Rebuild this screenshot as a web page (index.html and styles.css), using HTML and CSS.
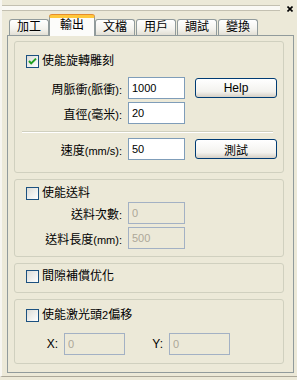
FILE: index.html
```html
<!DOCTYPE html>
<html lang="zh-Hant">
<head>
    <meta charset="UTF-8">
    <title>輸出</title>
    <link rel="stylesheet" href="styles.css">
</head>
<body>
    <div class="window">
        <div class="titlebar">
            <div class="grip"></div>
            <svg class="close" width="6" height="6" viewBox="0 0 6 6">
                <path d="M0.5 0.5 L5.5 5.5 M5.5 0.5 L0.5 5.5" stroke="#000" stroke-width="1.6"/>
            </svg>
        </div>

        <div class="tabs">
            <div class="tab">加工</div>
            <div class="tab active">輸出</div>
            <div class="tab">文檔</div>
            <div class="tab">用戶</div>
            <div class="tab">調試</div>
            <div class="tab">變換</div>
        </div>

        <div class="tabpage">
            <div class="group rotate">
                <label class="check">
                    <span class="box">
                        <svg width="11" height="11" viewBox="0 0 11 11">
                            <path d="M2 5 L4.2 7.4 L9 2.6" fill="none" stroke="#21A121" stroke-width="2"/>
                        </svg>
                    </span>
                    <span>使能旋轉雕刻</span>
                </label>
                <div class="row first">
                    <span class="label">周脈衝<span class="lat">(</span>脈衝<span class="lat">):</span></span>
                    <input class="field" type="text" value="1000">
                    <button class="btn">Help</button>
                </div>
                <div class="row">
                    <span class="label">直徑<span class="lat">(</span>毫米<span class="lat">):</span></span>
                    <input class="field" type="text" value="20">
                </div>
                <div class="sep"></div>
                <div class="row speed">
                    <span class="label">速度<span class="lat">(mm/s):</span></span>
                    <input class="field" type="text" value="50">
                    <button class="btn">測試</button>
                </div>
            </div>

            <div class="group feed">
                <label class="check"><span class="box"></span><span>使能送料</span></label>
                <div class="row first">
                    <span class="label">送料次數<span class="lat">:</span></span>
                    <input class="field" type="text" value="0" disabled>
                </div>
                <div class="row">
                    <span class="label">送料長度<span class="lat">(mm):</span></span>
                    <input class="field" type="text" value="500" disabled>
                </div>
            </div>

            <div class="group gap">
                <label class="check"><span class="box"></span><span>間隙補償优化</span></label>
            </div>

            <div class="group offset">
                <label class="check"><span class="box"></span><span>使能激光頭<span class="lat">2</span>偏移</span></label>
                <div class="row first">
                    <span class="label xlabel lat">X:</span>
                    <input class="field small" type="text" value="0" disabled>
                    <span class="label ylabel lat">Y:</span>
                    <input class="field small" type="text" value="0" disabled>
                </div>
            </div>
        </div>
    </div>
</body>
</html>
```

FILE: styles.css
```css
* {
    box-sizing: border-box;
    margin: 0;
    padding: 0;
}

body {
    background: #ECE9D8;
    color: #000;
    font-family: "Liberation Sans", "Noto Sans CJK TC", sans-serif;
    font-size: 12px;
    width: 297px;
    height: 380px;
    overflow: hidden;
}

.lat {
    font-size: 11px;
}

.window {
    height: 377px;
    border-left: 2px solid #F7F6F1;
    border-bottom: 1px solid #ACA899;
}

/* grip bar + close */
.titlebar {
    height: 15px;
    display: flex;
    align-items: flex-start;
}

.grip {
    width: 278px;
    height: 6px;
    margin-top: 5px;
    background: #FAF9F5;
    border-top: 1px solid #C3C0B1;
    border-bottom: 1px solid #C3C0B1;
}

.close {
    margin: 6px 0 0 7px;
}

/* tabs */
.tabs {
    height: 20px;
    display: flex;
    align-items: flex-end;
    gap: 1px;
    padding-left: 7px;
}

.tab {
    height: 16px;
    padding: 0 7px;
    line-height: 14px;
    border: 1px solid #919B9C;
    border-bottom: none;
    border-radius: 3px 3px 0 0;
    background: linear-gradient(#FFFFFF, #F4F3EE 60%, #E2DFD4);
}

.tab.active {
    height: 21px;
    padding: 0 10px;
    margin: 0 -1px -1px;
    line-height: 15px;
    border-top: 3px solid #FFC83C;
    box-shadow: 0 -1px 0 #E68B2C;
    background: #FCFCFA;
    position: relative;
    z-index: 1;
}

/* page */
.tabpage {
    margin-left: 5px;
    width: 287px;
    height: 338px;
    border: 1px solid #919B9C;
    padding: 5px 0 0 6px;
    display: flex;
    flex-direction: column;
    gap: 6px;
}

.group {
    width: 270px;
    border: 1px solid #D0D0BF;
    border-radius: 3px;
    padding-left: 11px;
    display: flex;
    flex-direction: column;
}

.rotate { height: 132px; padding-top: 13px; }
.feed { height: 78px; padding-top: 7px; }
.gap { height: 30px; padding-top: 6px; }
.offset { height: 65px; padding-top: 9px; }

.check {
    display: flex;
    align-items: center;
    gap: 3px;
    height: 13px;
    line-height: 13px;
    white-space: nowrap;
}

.box {
    width: 13px;
    height: 13px;
    border: 1px solid #1C5180;
    background: linear-gradient(135deg, #DCDCD7, #FFFFFF);
    display: flex;
}

.row {
    display: flex;
    align-items: center;
    height: 22px;
    margin-top: 3px;
}

.rotate .first { margin-top: 9px; }
.feed .first { margin-top: 2px; }
.offset .first { margin-top: 11px; }
.speed { margin-top: 5px; }

.label {
    width: 96px;
    margin-right: 6px;
    text-align: right;
    white-space: nowrap;
}

.xlabel { width: 32px; font-size: 12px; }
.ylabel { width: 38px; font-size: 12px; }

.field {
    width: 57px;
    height: 22px;
    padding: 0 3px;
    border: 1px solid #7F9DB9;
    background: #fff;
    color: #000;
    font-family: "Liberation Sans", sans-serif;
    font-size: 11px;
    outline: none;
}

.field:disabled {
    border-color: #A3B1C4;
    background: #ECE9D8;
    color: #ACA899;
}

.field.small {
    width: 61px;
}

.sep {
    width: 251px;
    margin: 7px 0 0 -4px;
    border-top: 1px solid #D0D0BF;
    border-bottom: 1px solid #FFFFFF;
}

.btn {
    width: 82px;
    height: 20px;
    margin-left: 10px;
    border: 1px solid #003C74;
    border-radius: 3px;
    background: linear-gradient(#FFFFFF, #F3F2EE 70%, #D6D0C5);
    color: #000;
    font-family: "Liberation Sans", "Noto Sans CJK TC", sans-serif;
    font-size: 12px;
    cursor: pointer;
}
```
